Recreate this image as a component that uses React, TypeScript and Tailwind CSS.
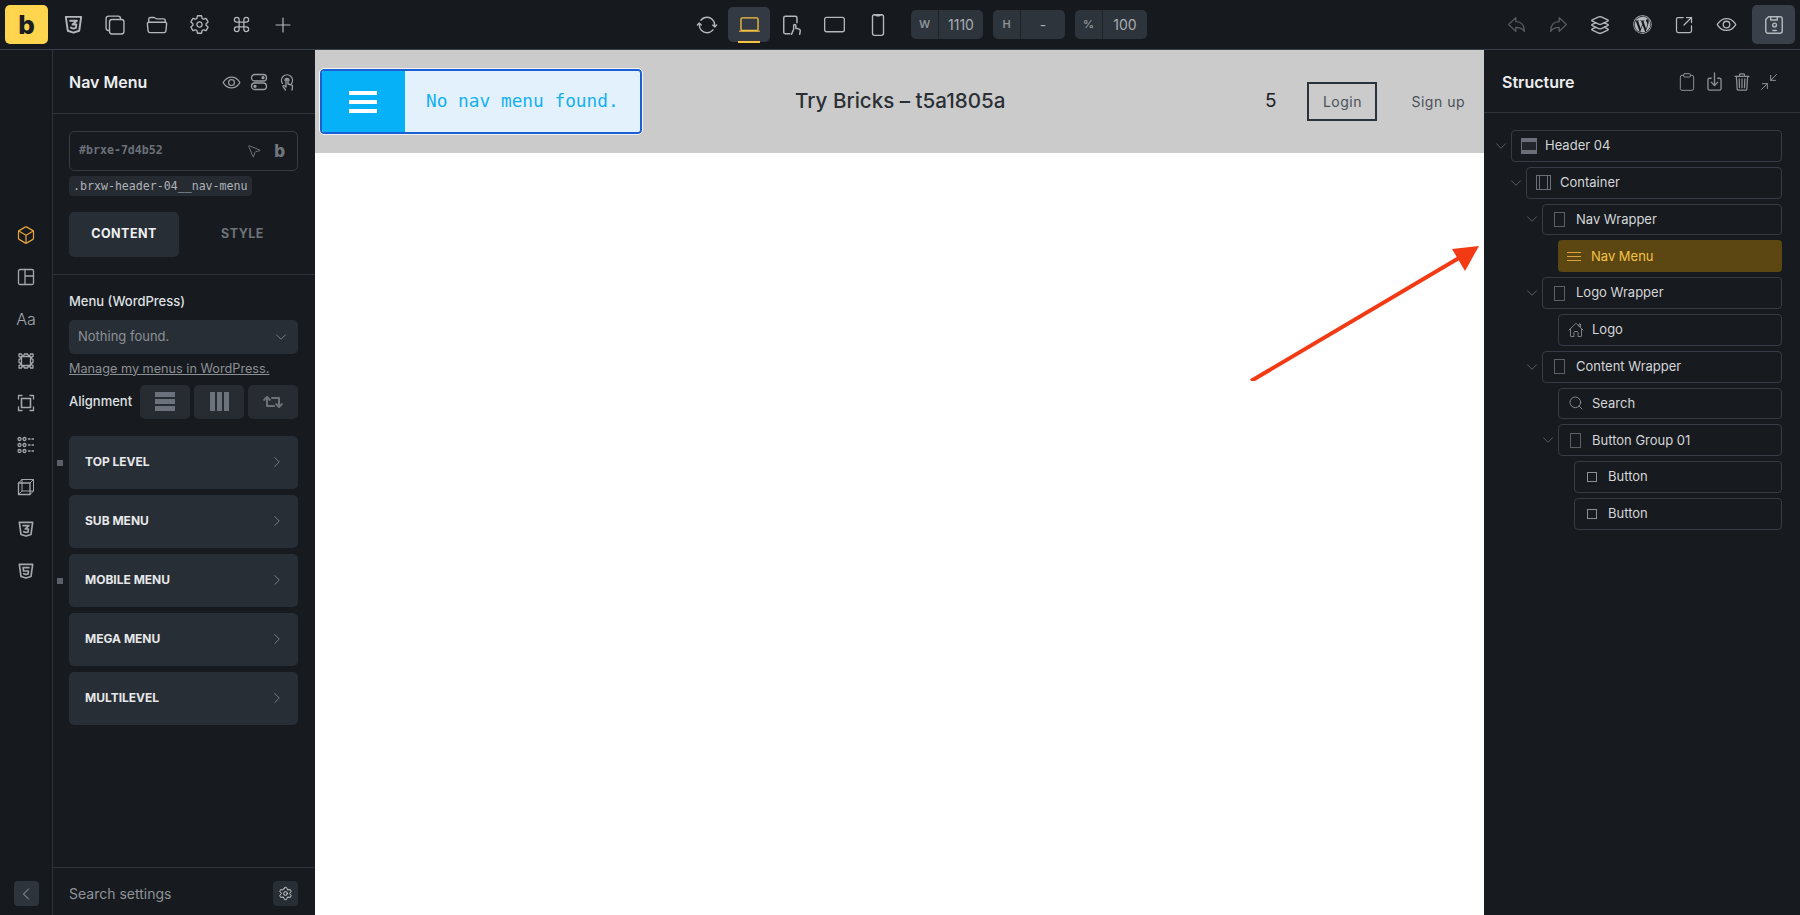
import { ChevronDown, ChevronLeft, ChevronRight, Clipboard, Command, Minimize2, MousePointer2, Plus, Search, Settings, SquareArrowOutUpRight } from "lucide-react";
import { FaRetweet } from "react-icons/fa";
import {
  IoArrowRedoOutline,
  IoArrowUndoOutline,
  IoCopyOutline,
  IoCubeOutline,
  IoDownloadOutline,
  IoEyeOutline,
  IoFolderOpenOutline,
  IoHomeOutline,
  IoLaptopOutline,
  IoLayersOutline,
  IoLogoWordpress,
  IoPhonePortraitOutline,
  IoSettingsOutline,
  IoSyncOutline,
  IoTabletLandscapeOutline,
  IoTrashOutline,
} from "react-icons/io5";
import { TbBrandCss3, TbBrandHtml5 } from "react-icons/tb";
import type { ReactNode } from "react";

const mono = "font-['DejaVu_Sans_Mono',monospace]";

const Glyph = ({ children, size = 20 }: { children: ReactNode; size?: number }) => (
  <svg width={size} height={size} viewBox="0 0 20 20" fill="none" stroke="currentColor" strokeWidth="1.3" strokeLinecap="round" strokeLinejoin="round">
    {children}
  </svg>
);

const TabletHand = () => (
  <Glyph size={22}>
    <path d="M8 18H4a1.500 1.500 0 0 1-1.500-1.500v-13A1.500 1.500 0 0 1 4 2h9a1.500 1.500 0 0 1 1.500 1.500V8" />
    <path d="M9.500 18.500l2-4.500v-3.500a1 1 0 0 1 2 0V13l3 .8c.8.2 1 1 1 1.700l-.5 3" />
  </Glyph>
);

const Floppy = () => (
  <Glyph size={22}>
    <path d="M5 2.500h10.500a2 2 0 0 1 2 2v11a2 2 0 0 1-2 2h-11a2 2 0 0 1-2-2V5z" />
    <path d="M7 2.500v3h6v-3" />
    <circle cx="10.500" cy="10" r="1.700" />
    <path d="M9 15h3" />
  </Glyph>
);

const LayoutGlyph = () => (
  <Glyph>
    <rect x="2.500" y="2.500" width="15" height="15" rx="1.500" />
    <path d="M9 2.500v15M9 9h8.500" />
  </Glyph>
);

const Scalloped = () => (
  <Glyph>
    <rect x="5.500" y="5.500" width="9" height="9" />
    <path d="M3 3h2.500a1.500 1.500 0 0 0 3 0h3a1.500 1.500 0 0 0 3 0H17v2.500a1.500 1.500 0 0 0 0 3v3a1.500 1.500 0 0 0 0 3V17h-2.500a1.500 1.500 0 0 0-3 0h-3a1.500 1.500 0 0 0-3 0H3v-2.500a1.500 1.500 0 0 0 0-3v-3a1.500 1.500 0 0 0 0-3z" />
  </Glyph>
);

const Corners = () => (
  <Glyph>
    <rect x="5.500" y="5.500" width="9" height="9" strokeWidth="1.600" />
    <path d="M2.500 6V2.500H6M14 2.500h3.500V6M17.500 14v3.500H14M6 17.500H2.500V14" />
  </Glyph>
);

const DotList = () => (
  <Glyph>
    {[4, 10, 16].map((y) => (
      <g key={y}>
        <circle cx="3.500" cy={y} r="1.500" />
        <circle cx="8.500" cy={y} r="1.500" />
        <path d={`M12.500 ${y}h1.500M16 ${y}h1.500`} />
      </g>
    ))}
  </Glyph>
);

const Box3d = () => (
  <Glyph>
    <rect x="2.500" y="6" width="11.500" height="11.500" />
    <path d="M6 2.500h11.500V14L14 17.500M6 2.500L2.500 6M17.500 2.500L14 6M6 2.500V14h11.500M6 14l-3.500 3.500" strokeWidth="1" />
  </Glyph>
);

const Pills = () => (
  <Glyph>
    <rect x="2.500" y="2.500" width="15" height="6.500" rx="3.250" />
    <rect x="2.500" y="11" width="15" height="6.500" rx="3.250" />
    <circle cx="14" cy="5.700" r="1" fill="currentColor" />
    <circle cx="6" cy="14.300" r="1" fill="currentColor" />
  </Glyph>
);

const TouchHand = () => (
  <Glyph>
    <path d="M5.500 11.500a5.500 5.500 0 1 1 9 0" />
    <path d="M8 8.500a2 2 0 1 1 4 0" />
    <path d="M8.500 18l-2.300-3.200c-.5-.8.500-1.600 1.200-1L9 15V8.700a1 1 0 0 1 2 0V12l3.700 1c.6.200 1 .700.800 1.300L15 18" />
  </Glyph>
);

const Bars = ({ vertical = false }: { vertical?: boolean }) => (
  <div className={vertical ? "flex h-[19px] gap-[2px]" : "flex w-[20px] flex-col gap-[2px]"}>
    {[0, 1, 2].map((i) => (
      <div key={i} className={vertical ? "h-full w-[5px] bg-[#6c727b]" : "h-[5px] w-full bg-[#6c727b]"} />
    ))}
  </div>
);

const rowIcons: Record<string, ReactNode> = {
  header: (
    <div className="flex h-[16px] w-[16px] flex-col justify-between border border-[#6b7078] bg-[#23272d]">
      <div className="h-[3px] bg-[#6b7078]" />
      <div className="h-[3px] bg-[#6b7078]" />
    </div>
  ),
  container: (
    <div className="flex h-[15px] w-[15px] justify-between border border-[#6b7078] px-[2px]">
      <div className="h-full w-px bg-[#6b7078]" />
      <div className="h-full w-px bg-[#6b7078]" />
    </div>
  ),
  wrapper: <div className="ml-[2px] h-[15px] w-[11px] border border-[#5b6068]" />,
  menu: (
    <div className="flex w-[14px] flex-col gap-[3px]">
      <div className="h-px bg-[#d8a23e]" />
      <div className="h-px bg-[#d8a23e]" />
      <div className="h-px bg-[#d8a23e]" />
    </div>
  ),
  logo: <IoHomeOutline className="text-[16px] text-[#7b8087]" />,
  search: <Search className="h-[16px] w-[16px] text-[#8a8f96]" strokeWidth={1.4} />,
  button: <div className="ml-[3px] h-[10px] w-[10px] border border-[#8a8f96]" />,
};

const rows = [
  { name: "Header 04", indent: "w-0", open: true, icon: "header" },
  { name: "Container", indent: "w-[15px]", open: true, icon: "container" },
  { name: "Nav Wrapper", indent: "w-[31px]", open: true, icon: "wrapper" },
  { name: "Nav Menu", indent: "w-[47px]", open: false, icon: "menu", active: true },
  { name: "Logo Wrapper", indent: "w-[31px]", open: true, icon: "wrapper" },
  { name: "Logo", indent: "w-[47px]", open: false, icon: "logo" },
  { name: "Content Wrapper", indent: "w-[31px]", open: true, icon: "wrapper" },
  { name: "Search", indent: "w-[47px]", open: false, icon: "search" },
  { name: "Button Group 01", indent: "w-[47px]", open: true, icon: "wrapper" },
  { name: "Button", indent: "w-[63px]", open: false, icon: "button" },
  { name: "Button", indent: "w-[63px]", open: false, icon: "button" },
];

const sections = [
  { label: "TOP LEVEL", dot: true },
  { label: "SUB MENU", dot: false },
  { label: "MOBILE MENU", dot: true },
  { label: "MEGA MENU", dot: false },
  { label: "MULTILEVEL", dot: false },
];

const TopBar = () => (
  <div className="flex h-[50px] shrink-0 items-center border-b border-[#3a4049] bg-[#161a1e] text-[#b4b8bd]">
    <div className="ml-[5px] flex h-[39px] w-[43px] items-center justify-center rounded-[5px] bg-[#ffd54f]">
      <span className="text-[26px] leading-none font-extrabold text-[#1a1d21]">b</span>
    </div>
    <div className="ml-[4px] flex w-[252px] items-center text-[21px]">
      <span className="flex w-[42px] justify-center"><TbBrandCss3 className="text-[23px]" /></span>
      <span className="flex w-[42px] justify-center"><IoCopyOutline className="text-[22px]" /></span>
      <span className="flex w-[42px] justify-center"><IoFolderOpenOutline className="text-[22px]" /></span>
      <span className="flex w-[42px] justify-center"><IoSettingsOutline /></span>
      <span className="flex w-[42px] justify-center"><Command className="h-[19px] w-[19px]" strokeWidth={1.6} /></span>
      <span className="flex w-[42px] justify-center"><Plus className="h-[24px] w-[24px]" strokeWidth={1.2} /></span>
    </div>
    <div className="ml-[381px] flex items-center text-[21px]">
      <span className="flex w-[43px] justify-center"><IoSyncOutline className="text-[22px]" /></span>
      <span className="relative flex h-[35px] w-[42px] items-center justify-center rounded-[5px] bg-[#333a43] text-[#f5c242]">
        <IoLaptopOutline className="text-[21px]" />
        <span className="absolute bottom-[-1px] left-[10px] h-[2px] w-[22px] bg-[#f5c242]" />
      </span>
      <span className="flex w-[43px] justify-center"><TabletHand /></span>
      <span className="flex w-[43px] justify-center"><IoTabletLandscapeOutline /></span>
      <span className="flex w-[43px] justify-center"><IoPhonePortraitOutline className="text-[22px]" /></span>
    </div>
    <div className="ml-[12px] flex items-center gap-[10px]">
      {[["W", "1110"], ["H", "-"], ["%", "100"]].map(([k, v]) => (
        <div key={k} className="flex h-[29px] w-[72px] items-center rounded-[5px] bg-[#2e343b] text-[#a8acb2]">
          <span className="flex h-full w-[28px] items-center justify-center border-r border-[#1f2328] text-[11px] font-semibold text-[#8d9299]">{k}</span>
          <span className="flex-1 text-center text-[14px]">{v}</span>
        </div>
      ))}
    </div>
    <div className="ml-auto flex items-center text-[21px]">
      <span className="flex w-[42px] justify-center text-[#555b63]"><IoArrowUndoOutline /></span>
      <span className="flex w-[42px] justify-center text-[#555b63]"><IoArrowRedoOutline /></span>
      <span className="flex w-[42px] justify-center"><IoLayersOutline className="text-[22px]" /></span>
      <span className="flex w-[42px] justify-center"><IoLogoWordpress /></span>
      <span className="flex w-[42px] justify-center"><SquareArrowOutUpRight className="h-[20px] w-[20px]" strokeWidth={1.5} /></span>
      <span className="flex w-[42px] justify-center"><IoEyeOutline /></span>
      <span className="mr-[5px] ml-[5px] flex h-[39px] w-[43px] items-center justify-center rounded-[5px] bg-[#39404a]"><Floppy /></span>
    </div>
  </div>
);

const Rail = () => (
  <div className="flex w-[53px] shrink-0 flex-col items-center border-r border-[#2d333b] bg-[#161a1e] text-[#a4a8ae]">
    <div className="mt-[175px] flex flex-col items-center gap-[22px] text-[20px]">
      <IoCubeOutline className="text-[#e5a13c]" />
      <LayoutGlyph />
      <span className="flex h-[20px] items-center text-[16px] leading-none font-light">Aa</span>
      <Scalloped />
      <Corners />
      <DotList />
      <Box3d />
      <TbBrandCss3 />
      <TbBrandHtml5 />
    </div>
    <div className="mt-auto mb-[9px] flex h-[25px] w-[25px] items-center justify-center rounded-[4px] bg-[#2e343c]">
      <ChevronLeft className="h-[20px] w-[20px]" strokeWidth={1.2} />
    </div>
  </div>
);

const SettingsPanel = () => (
  <div className="flex w-[262px] shrink-0 flex-col bg-[#171a1e] text-[#e8eaed]">
    <div className="flex h-[64px] shrink-0 items-center justify-between border-b border-[#2d333b] pt-[1px] pr-[18px] pl-[16px] text-[#9a9ea4]">
      <span className="text-[16px] font-semibold text-[#eceef0]">Nav Menu</span>
      <div className="flex items-center gap-[8px] text-[19px]">
        <IoEyeOutline />
        <Pills />
        <TouchHand />
      </div>
    </div>
    <div className="pr-[17px] pl-[16px]">
      <div className="mt-[17px] flex h-[40px] w-[229px] items-center justify-between rounded-[5px] border border-[#363c45] pr-[12px] pl-[9px]">
        <span className={`${mono} text-[11.600px] font-bold text-[#6b7078]`}>#brxe-7d4b52</span>
        <div className="flex items-center gap-[12px] text-[#72777e]">
          <MousePointer2 className="h-[16px] w-[16px]" strokeWidth={1.4} />
          <span className="text-[17px] leading-none font-extrabold">b</span>
        </div>
      </div>
      <div className={`${mono} mt-[5px] h-[20px] w-[183px] rounded-[4px] bg-[#262b32] px-[4px] text-[11.600px] leading-[20px] whitespace-nowrap text-[#aeb2b7]`}>
        .brxw-header-04__nav-menu
      </div>
      <div className="mt-[16px] flex h-[45px] items-center">
        <div className="flex h-full w-[110px] shrink-0 items-center justify-center rounded-[5px] bg-[#282e35] text-[12.500px] font-bold tracking-[0.5px] text-[#eef0f2]">CONTENT</div>
        <div className="flex h-full w-[127px] shrink-0 items-center justify-center text-[12.500px] font-bold tracking-[0.5px] text-[#6e737a]">STYLE</div>
      </div>
    </div>
    <div className="mt-[17px] border-t border-[#2d333b] pr-[17px] pl-[16px]">
      <div className="mt-[17px] text-[13px] font-medium text-[#dfe1e4]">Menu (WordPress)</div>
      <div className="mt-[8px] flex h-[34px] items-center justify-between rounded-[5px] bg-[#282e35] pr-[8px] pl-[9px] text-[13px] text-[#8b9096]">
        Nothing found.
        <ChevronDown className="h-[18px] w-[18px] text-[#7f848b]" strokeWidth={1.2} />
      </div>
      <div className="mt-[5px] text-[12.700px] whitespace-nowrap text-[#8b9096] underline">Manage my menus in WordPress.</div>
      <div className="mt-[7px] flex items-center justify-between">
        <span className="text-[13px] font-medium text-[#dfe1e4]">Alignment</span>
        <div className="flex gap-[4px]">
          <div className="flex h-[34px] w-[50px] items-center justify-center rounded-[5px] bg-[#262c32]"><Bars /></div>
          <div className="flex h-[34px] w-[50px] items-center justify-center rounded-[5px] bg-[#262c32]"><Bars vertical /></div>
          <div className="flex h-[34px] w-[50px] items-center justify-center rounded-[5px] bg-[#262c32] text-[#6c727b]"><FaRetweet className="text-[20px]" /></div>
        </div>
      </div>
      <div className="mt-[17px] flex flex-col gap-[6px]">
        {sections.map((s) => (
          <div key={s.label} className="relative flex h-[53px] items-center justify-between rounded-[5px] bg-[#282e35] pr-[12px] pl-[16px]">
            {s.dot && <span className="absolute top-[24px] left-[-12px] h-[6px] w-[6px] bg-[#5a6069]" />}
            <span className="text-[12px] font-bold text-[#e6e8ea]">{s.label}</span>
            <ChevronRight className="h-[18px] w-[18px] text-[#7f848b]" strokeWidth={1.2} />
          </div>
        ))}
      </div>
    </div>
    <div className="mt-auto flex h-[48px] shrink-0 items-center justify-between border-t border-[#2d333b] pt-[3px] pr-[17px] pl-[16px]">
      <span className="text-[14px] text-[#8f9399]">Search settings</span>
      <span className="flex h-[25px] w-[25px] items-center justify-center rounded-[4px] bg-[#282e35]">
        <Settings className="h-[15px] w-[15px] text-[#d5d7da]" strokeWidth={1.6} />
      </span>
    </div>
  </div>
);

const Canvas = () => (
  <div className="relative flex-1 bg-white">
    <div className="flex h-[103px] items-center bg-[#cbcbcb] pr-[19px] pl-[5px]">
      <div className="flex h-[65px] w-[322px] overflow-hidden rounded-[4px] border-2 border-[#1a5fd3] bg-[#e3f1fd] outline outline-1 outline-[#f2f2f2]">
        <div className="flex w-[83px] shrink-0 flex-col items-center justify-center gap-[5px] bg-[#07b1f7] pr-[2px]">
          <div className="h-[4px] w-[28px] bg-white" />
          <div className="h-[4px] w-[28px] bg-white" />
          <div className="h-[4px] w-[28px] bg-white" />
        </div>
        <div className={`${mono} flex flex-1 items-center pl-[21px] text-[17.800px] text-[#13b0f2]`}>No nav menu found.</div>
      </div>
      <div className="ml-[153px] text-[20.600px] font-medium whitespace-nowrap text-[#2a2f35]">Try Bricks – t5a1805a</div>
      <div className="ml-auto flex items-center">
        <span className="text-[19px] text-[#1c2025]">5</span>
        <span className="ml-[31px] flex h-[39px] w-[70px] items-center justify-center border-2 border-[#2a323b] text-[14px] tracking-[0.5px] text-[#4a5058]">Login</span>
        <span className="ml-[34px] text-[14px] tracking-[0.5px] text-[#4a5058]">Sign up</span>
      </div>
    </div>
    <svg className="absolute top-[181px] left-[931px]" width="240" height="150" viewBox="0 0 240 150" fill="none">
      <path d="M5 150L218 24" stroke="#f23a14" strokeWidth="4" />
      <path d="M233 15L206 18L219 40z" fill="#f23a14" />
    </svg>
  </div>
);

const StructurePanel = () => (
  <div className="flex w-[316px] shrink-0 flex-col bg-[#171a1e]">
    <div className="flex h-[63px] shrink-0 items-center justify-between border-b border-[#2d333b] pt-[1px] pr-[21px] pl-[18px] text-[#8d9197]">
      <span className="text-[16px] font-semibold text-[#eceef0]">Structure</span>
      <div className="flex items-center gap-[7px]">
        <Clipboard className="h-[20px] w-[20px]" strokeWidth={1.2} />
        <IoDownloadOutline className="text-[21px]" />
        <IoTrashOutline className="text-[20px]" />
        <Minimize2 className="h-[20px] w-[20px]" strokeWidth={1.2} />
      </div>
    </div>
    <div className="mt-[17px] flex flex-col gap-[5px] pr-[18px] pl-[8px]">
      {rows.map((r, i) => (
        <div key={i} className="flex h-[31.800px] items-center">
          <div className={`${r.indent} shrink-0`} />
          <div className="flex w-[19px] shrink-0 items-center">
            {r.open && <ChevronDown className="h-[18px] w-[18px] text-[#666b72]" strokeWidth={1.1} />}
          </div>
          <div className={r.active ? "flex h-full flex-1 items-center rounded-[4px] bg-[#5c4713] pl-[9px] text-[13px] text-[#f4c245]" : "flex h-full flex-1 items-center rounded-[4px] border border-[#363c45] pl-[9px] text-[13px] text-[#d4d6d9]"}>
            <span className="flex w-[24px] shrink-0 items-center">{rowIcons[r.icon]}</span>
            {r.name}
          </div>
        </div>
      ))}
    </div>
  </div>
);

export default function App() {
  return (
    <div className="flex h-[915px] w-full flex-col overflow-hidden bg-[#161a1e] font-['Inter',sans-serif]">
      <TopBar />
      <div className="flex min-h-0 flex-1">
        <Rail />
        <SettingsPanel />
        <Canvas />
        <StructurePanel />
      </div>
    </div>
  );
}
